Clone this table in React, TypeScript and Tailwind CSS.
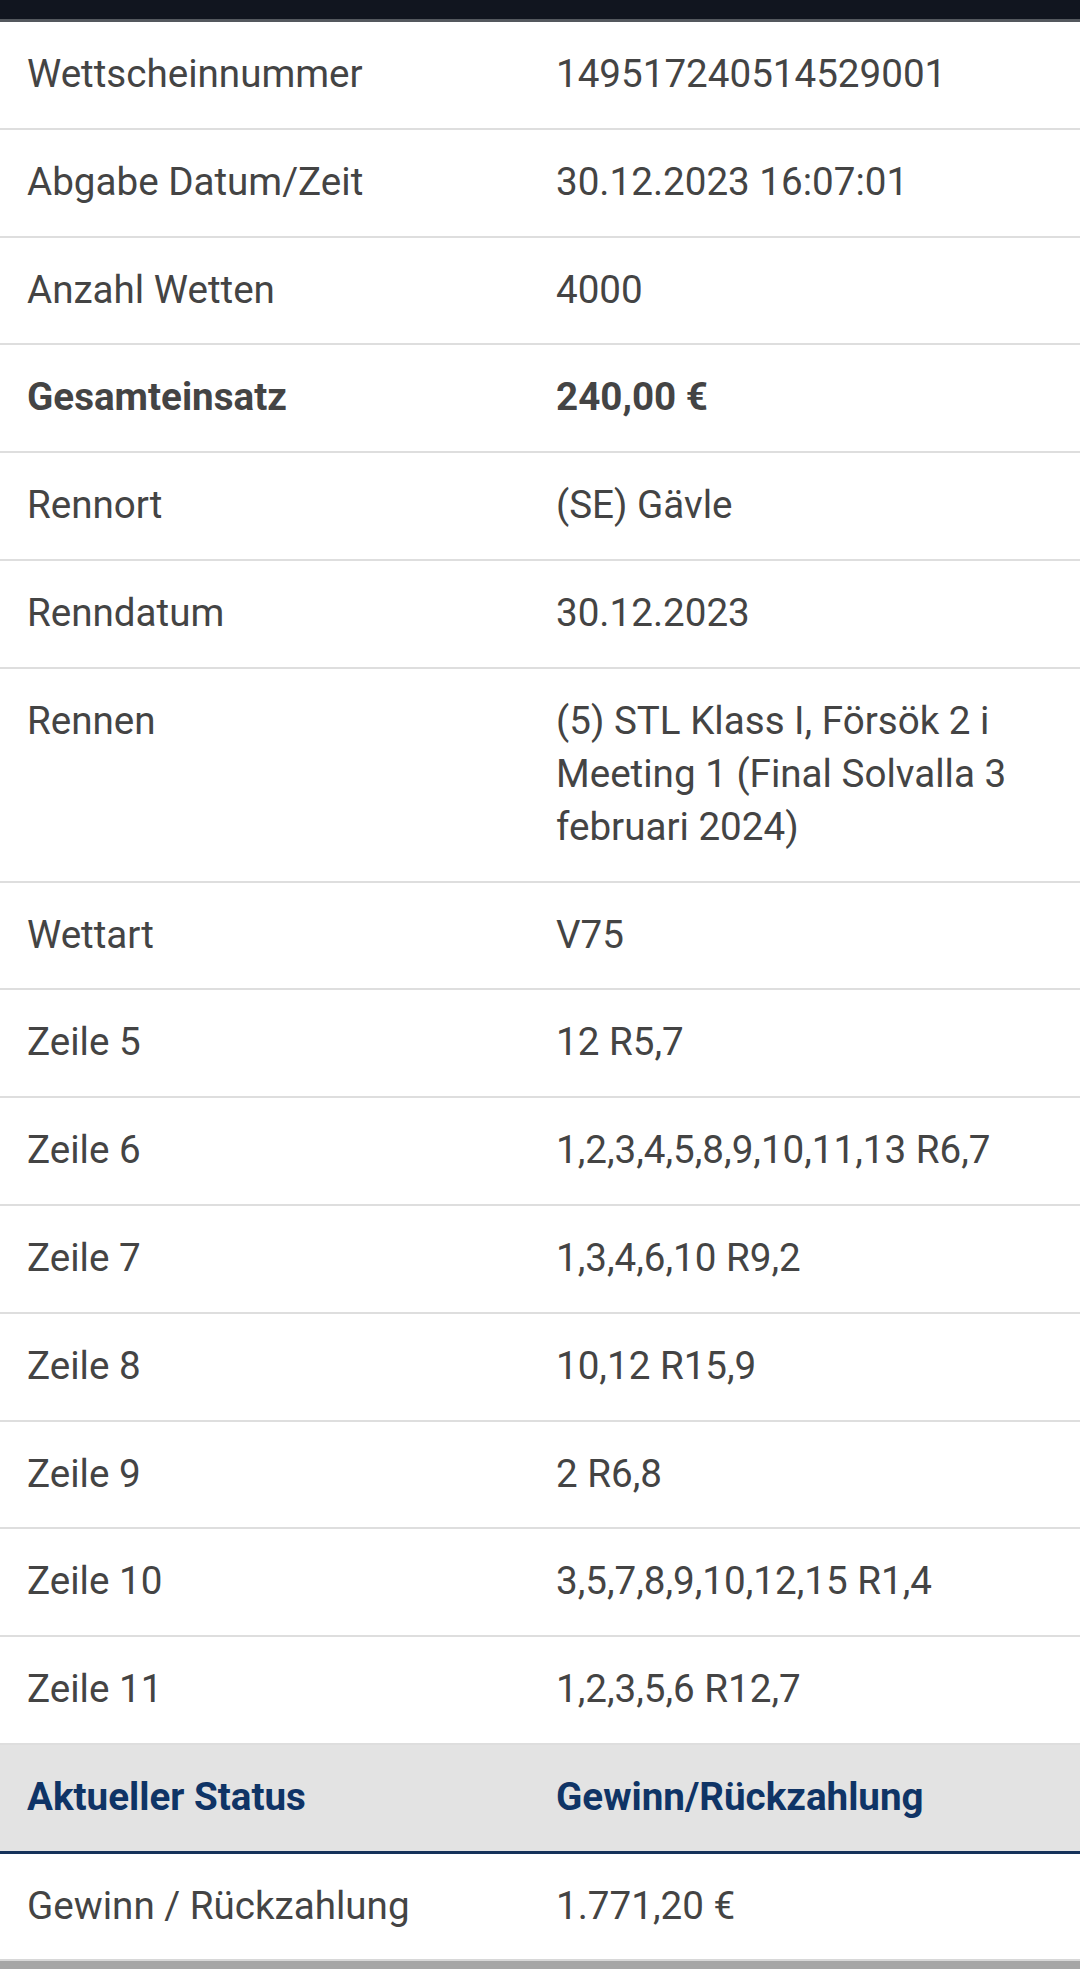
const rows: { label: string; value: string; bold?: boolean }[] = [
  { label: "Wettscheinnummer", value: "149517240514529001" },
  { label: "Abgabe Datum/Zeit", value: "30.12.2023 16:07:01" },
  { label: "Anzahl Wetten", value: "4000" },
  { label: "Gesamteinsatz", value: "240,00 €", bold: true },
  { label: "Rennort", value: "(SE) Gävle" },
  { label: "Renndatum", value: "30.12.2023" },
  { label: "Rennen", value: "(5) STL Klass I, Försök 2 i Meeting 1 (Final Solvalla 3 februari 2024)" },
  { label: "Wettart", value: "V75" },
  { label: "Zeile 5", value: "12 R5,7" },
  { label: "Zeile 6", value: "1,2,3,4,5,8,9,10,11,13 R6,7" },
  { label: "Zeile 7", value: "1,3,4,6,10 R9,2" },
  { label: "Zeile 8", value: "10,12 R15,9" },
  { label: "Zeile 9", value: "2 R6,8" },
  { label: "Zeile 10", value: "3,5,7,8,9,10,12,15 R1,4" },
  { label: "Zeile 11", value: "1,2,3,5,6 R12,7" },
];

function Row({ label, value, bold }: { label: string; value: string; bold?: boolean }) {
  return (
    <div className={`grid grid-cols-[528px_1fr] border-b-2 border-[#dedede] pt-[25px] pb-[27.8px] ${bold ? "font-bold" : ""}`}>
      <div className="pl-[27px]">{label}</div>
      <div className="pl-[28px] pr-[40px]">{value}</div>
    </div>
  );
}

export default function App() {
  return (
    <div
      className="w-[1080px] h-[1969px] bg-white text-[#444444] text-[38.6px] leading-[53px] overflow-hidden flex flex-col"
      style={{ fontFamily: "Roboto, 'Noto Sans', sans-serif" }}
    >
      <div className="h-[19px] bg-[#11151f]" />
      <div className="h-[3px] bg-[#54585e]" />
      {rows.map((r) => (
        <Row key={r.label} {...r} />
      ))}
      <div className="grid grid-cols-[528px_1fr] bg-[#e3e3e3] border-b-[3px] border-[#15325a] pt-[25px] pb-[28px] font-bold text-[#0f3466]">
        <div className="pl-[27px]">Aktueller Status</div>
        <div className="pl-[28px]">Gewinn/Rückzahlung</div>
      </div>
      <div className="grid grid-cols-[528px_1fr] border-b-2 border-[#d8d8d8] pt-[25px] pb-[27px]">
        <div className="pl-[27px]">Gewinn / Rückzahlung</div>
        <div className="pl-[28px]">1.771,20 €</div>
      </div>
      <div className="flex-1 bg-[#a6a6a6]" />
    </div>
  );
}
